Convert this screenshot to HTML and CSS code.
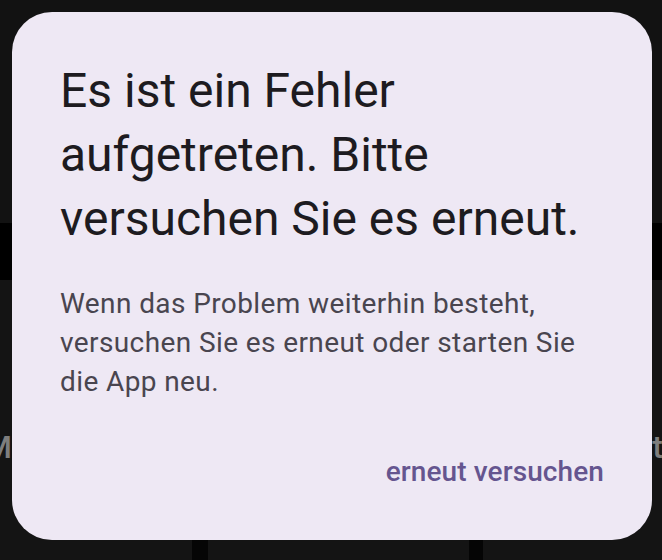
FILE: index.html
```html
<!DOCTYPE html>
<html lang="de">
<head>
<meta charset="utf-8">
<title>Fehler</title>
<link rel="stylesheet" href="styles.css">
</head>
<body>
<div class="app">
  <div class="app-top"></div>
  <div class="app-band"></div>
  <div class="app-lower">
    <div class="labels">
      <span class="label label-left">M</span>
      <span class="label label-right">t</span>
    </div>
    <div class="strips">
      <span class="strip strip-a"></span>
      <span class="strip strip-b"></span>
    </div>
  </div>
</div>
<div class="dialog" role="alertdialog">
  <h1 class="dialog-title">Es ist ein Fehler aufgetreten. Bitte versuchen Sie es erneut.</h1>
  <p class="dialog-body">Wenn das Problem weiterhin besteht, versuchen Sie es erneut oder starten Sie die App neu.</p>
  <div class="dialog-actions">
    <button class="dialog-button" type="button">erneut versuchen</button>
  </div>
</div>
</body>
</html>
```
FILE: styles.css
```css
html, body {
  margin: 0;
  padding: 0;
  width: 662px;
  height: 560px;
  overflow: hidden;
  background: #121212;
  font-family: Roboto, "Noto Sans", "Liberation Sans", sans-serif;
}

.app {
  width: 662px;
  height: 560px;
  display: flex;
  flex-direction: column;
}

.app-top {
  height: 223px;
  background: #121212;
}

.app-band {
  height: 57px;
  background: #000;
}

.app-lower {
  flex: 1;
  background: #141414;
  display: flex;
  flex-direction: column;
}

.labels {
  margin-top: 149px;
  display: flex;
  justify-content: space-between;
  overflow: hidden;
}

.label {
  font-size: 32px;
  line-height: 36px;
  font-weight: 500;
  color: #7e7e7e;
}

.label-left {
  margin-left: -16px;
}

.label-right {
  margin-right: -1px;
}

.strips {
  margin-top: auto;
  height: 20px;
  display: flex;
}

.strip {
  background: #050505;
  height: 100%;
}

.strip-a {
  margin-left: 192px;
  width: 16px;
}

.strip-b {
  margin-left: 261px;
  width: 14px;
}

.dialog {
  position: absolute;
  top: 12px;
  left: 12px;
  width: 640px;
  height: 528px;
  box-sizing: border-box;
  padding: 47px 48px 48px;
  border-radius: 40px;
  background: #eee8f4;
  display: flex;
  flex-direction: column;
}

.dialog-title {
  margin: 0;
  font-size: 48px;
  line-height: 64px;
  font-weight: 400;
  color: #1d1b20;
}

.dialog-body {
  margin: 33px 0 0;
  font-size: 28px;
  line-height: 39px;
  letter-spacing: 0.4px;
  font-weight: 400;
  color: #49454f;
}

.dialog-actions {
  margin-top: auto;
  display: flex;
  justify-content: flex-end;
}

.dialog-button {
  border: none;
  background: transparent;
  padding: 0;
  margin: 0;
  font-family: inherit;
  font-size: 28px;
  line-height: 40px;
  letter-spacing: 0.1px;
  font-weight: 500;
  color: #65558f;
}
```
